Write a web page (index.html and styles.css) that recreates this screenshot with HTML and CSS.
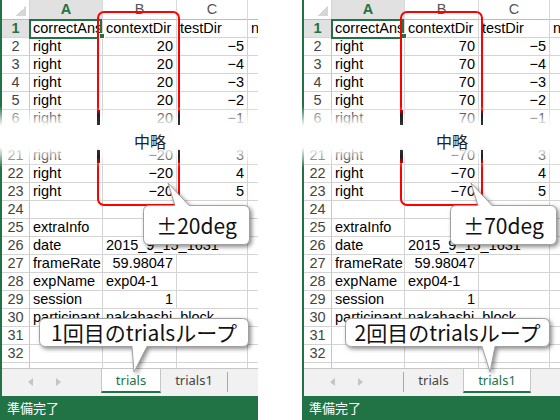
FILE: index.html
```html
<!DOCTYPE html>
<html lang="ja">
<head>
<meta charset="utf-8">
<link rel="stylesheet" href="styles.css">
</head>
<body>
<div class="page">

  <div class="panel">
    <div class="sheet">
      <div class="grid top">
        <div class="c corner"></div><div class="c ch sel">A</div><div class="c ch">B</div><div class="c ch">C</div><div class="c ch d"></div>
        <div class="c rh sel">1</div><div class="c">correctAns</div><div class="c">contextDir</div><div class="c">testDir</div><div class="c d">n</div>
        <div class="c rh">2</div><div class="c">right</div><div class="c n">20</div><div class="c n">−5</div><div class="c d"></div>
        <div class="c rh">3</div><div class="c">right</div><div class="c n">20</div><div class="c n">−4</div><div class="c d"></div>
        <div class="c rh">4</div><div class="c">right</div><div class="c n">20</div><div class="c n">−3</div><div class="c d"></div>
        <div class="c rh">5</div><div class="c">right</div><div class="c n">20</div><div class="c n">−2</div><div class="c d"></div>
        <div class="c rh">6</div><div class="c">right</div><div class="c n">20</div><div class="c n">−1</div><div class="c d"></div>
      </div>
      <div class="skip"></div>
      <div class="grid">
        <div class="c rh">21</div><div class="c">right</div><div class="c n">−20</div><div class="c n">3</div><div class="c d"></div>
        <div class="c rh">22</div><div class="c">right</div><div class="c n">−20</div><div class="c n">4</div><div class="c d"></div>
        <div class="c rh">23</div><div class="c">right</div><div class="c n">−20</div><div class="c n">5</div><div class="c d"></div>
        <div class="c rh">24</div><div class="c"></div><div class="c"></div><div class="c"></div><div class="c d"></div>
        <div class="c rh">25</div><div class="c">extraInfo</div><div class="c"></div><div class="c"></div><div class="c d"></div>
        <div class="c rh">26</div><div class="c">date</div><div class="c span2">2015_9_15_1631</div><div class="c d"></div>
        <div class="c rh">27</div><div class="c">frameRate</div><div class="c n">59.98047</div><div class="c"></div><div class="c d"></div>
        <div class="c rh">28</div><div class="c">expName</div><div class="c">exp04-1</div><div class="c"></div><div class="c d"></div>
        <div class="c rh">29</div><div class="c">session</div><div class="c n">1</div><div class="c"></div><div class="c d"></div>
        <div class="c rh">30</div><div class="c">participant</div><div class="c span2">nakahashi_block</div><div class="c d"></div>
        <div class="c rh">31</div><div class="c"></div><div class="c"></div><div class="c"></div><div class="c d"></div>
        <div class="c rh">32</div><div class="c"></div><div class="c"></div><div class="c"></div><div class="c d"></div>
        <div class="c rh"></div><div class="c"></div><div class="c"></div><div class="c"></div><div class="c d"></div>
      </div>
    </div>
    <div class="tabs">
      <div class="nav">
        <svg width="5" height="8" viewBox="0 0 5 8"><path d="M5 0V8L0 4Z" fill="#c4c4c4"/></svg>
        <svg width="5" height="8" viewBox="0 0 5 8"><path d="M0 0V8L5 4Z" fill="#c4c4c4"/></svg>
      </div>
      <div class="tab active w60">trials</div>
      <div class="tab w66">trials1</div>
      <div class="sep"></div>
    </div>
    <div class="status">準備完了</div>

    <div class="selbox"></div>
    <div class="handle"></div>
    <div class="redbox l"></div>
    <div class="tear"><span class="omit">中略</span></div>
    <div class="seg up" style="left:97px"></div>
    <div class="seg up" style="left:177.5px"></div>
    <div class="seg down" style="left:97px"></div>
    <div class="seg down" style="left:177.5px"></div>

    <div class="callout deg" style="left:143px">
      <svg width="107" height="40" viewBox="0 0 107 40"><path d="M6.5 .5H32L25 -22L46 .5H100.5Q106.5 .5 106.5 6.5V33.5Q106.5 39.5 100.5 39.5H6.5Q.5 39.5 .5 33.5V6.5Q.5 .5 6.5 .5Z"/></svg>
      <span>±20deg</span>
    </div>
    <div class="callout loop" style="left:39px;width:210px">
      <svg width="210" height="29" viewBox="0 0 210 29"><path d="M6.5 .5H203.5Q209.5 .5 209.5 6.5V22.5Q209.5 28.5 203.5 28.5H108L95 54L93 28.5H6.5Q.5 28.5 .5 22.5V6.5Q.5 .5 6.5 .5Z"/></svg>
      <span>1回目のtrialsループ</span>
    </div>
  </div>

  <div class="panel">
    <div class="sheet">
      <div class="grid top">
        <div class="c corner"></div><div class="c ch sel">A</div><div class="c ch">B</div><div class="c ch">C</div><div class="c ch d"></div>
        <div class="c rh sel">1</div><div class="c">correctAns</div><div class="c">contextDir</div><div class="c">testDir</div><div class="c d">n</div>
        <div class="c rh">2</div><div class="c">right</div><div class="c n">70</div><div class="c n">−5</div><div class="c d"></div>
        <div class="c rh">3</div><div class="c">right</div><div class="c n">70</div><div class="c n">−4</div><div class="c d"></div>
        <div class="c rh">4</div><div class="c">right</div><div class="c n">70</div><div class="c n">−3</div><div class="c d"></div>
        <div class="c rh">5</div><div class="c">right</div><div class="c n">70</div><div class="c n">−2</div><div class="c d"></div>
        <div class="c rh">6</div><div class="c">right</div><div class="c n">70</div><div class="c n">−1</div><div class="c d"></div>
      </div>
      <div class="skip"></div>
      <div class="grid">
        <div class="c rh">21</div><div class="c">right</div><div class="c n">−70</div><div class="c n">3</div><div class="c d"></div>
        <div class="c rh">22</div><div class="c">right</div><div class="c n">−70</div><div class="c n">4</div><div class="c d"></div>
        <div class="c rh">23</div><div class="c">right</div><div class="c n">−70</div><div class="c n">5</div><div class="c d"></div>
        <div class="c rh">24</div><div class="c"></div><div class="c"></div><div class="c"></div><div class="c d"></div>
        <div class="c rh">25</div><div class="c">extraInfo</div><div class="c"></div><div class="c"></div><div class="c d"></div>
        <div class="c rh">26</div><div class="c">date</div><div class="c span2">2015_9_15_1631</div><div class="c d"></div>
        <div class="c rh">27</div><div class="c">frameRate</div><div class="c n">59.98047</div><div class="c"></div><div class="c d"></div>
        <div class="c rh">28</div><div class="c">expName</div><div class="c">exp04-1</div><div class="c"></div><div class="c d"></div>
        <div class="c rh">29</div><div class="c">session</div><div class="c n">1</div><div class="c"></div><div class="c d"></div>
        <div class="c rh">30</div><div class="c">participant</div><div class="c span2">nakahashi_block</div><div class="c d"></div>
        <div class="c rh">31</div><div class="c"></div><div class="c"></div><div class="c"></div><div class="c d"></div>
        <div class="c rh">32</div><div class="c"></div><div class="c"></div><div class="c"></div><div class="c d"></div>
        <div class="c rh"></div><div class="c"></div><div class="c"></div><div class="c"></div><div class="c d"></div>
      </div>
    </div>
    <div class="tabs">
      <div class="nav">
        <svg width="5" height="8" viewBox="0 0 5 8"><path d="M5 0V8L0 4Z" fill="#c4c4c4"/></svg>
        <svg width="5" height="8" viewBox="0 0 5 8"><path d="M0 0V8L5 4Z" fill="#c4c4c4"/></svg>
      </div>
      <div class="sep"></div>
      <div class="tab w59">trials</div>
      <div class="tab active w68">trials1</div>
    </div>
    <div class="status">準備完了</div>

    <div class="selbox"></div>
    <div class="handle"></div>
    <div class="redbox r"></div>
    <div class="tear"><span class="omit">中略</span></div>
    <div class="seg up" style="left:98px"></div>
    <div class="seg up" style="left:178.5px"></div>
    <div class="seg down" style="left:98px"></div>
    <div class="seg down" style="left:178.5px"></div>

    <div class="callout deg" style="left:148px">
      <svg width="107" height="40" viewBox="0 0 107 40"><path d="M6.5 .5H28L21 -22L42 .5H100.5Q106.5 .5 106.5 6.5V33.5Q106.5 39.5 100.5 39.5H6.5Q.5 39.5 .5 33.5V6.5Q.5 .5 6.5 .5Z"/></svg>
      <span>±70deg</span>
    </div>
    <div class="callout loop" style="left:43px;width:205px">
      <svg width="205" height="29" viewBox="0 0 205 29"><path d="M6.5 .5H198.5Q204.5 .5 204.5 6.5V22.5Q204.5 28.5 198.5 28.5H150L145 54L137 28.5H6.5Q.5 28.5 .5 22.5V6.5Q.5 .5 6.5 .5Z"/></svg>
      <span>2回目のtrialsループ</span>
    </div>
  </div>

</div>
</body>
</html>
```

FILE: styles.css
```css
* { box-sizing: border-box; margin: 0; padding: 0; }

body {
  width: 560px;
  height: 420px;
  overflow: hidden;
  background: #fff;
  font-family: "Noto Sans", "Noto Sans CJK JP", sans-serif;
}

.page {
  display: flex;
  gap: 44px;
  width: 560px;
  height: 420px;
}

.panel {
  position: relative;
  flex: none;
  width: 258px;
  height: 420px;
  padding-left: 2px;
  display: flex;
  flex-direction: column;
  background: linear-gradient(#217346, #217346) left top / 2px 100% no-repeat;
}

.sheet {
  height: 368px;
  overflow: hidden;
  background: #fff;
  flex: none;
}

.grid {
  display: grid;
  grid-template-columns: 28px 73px 74px 71px 1fr;
  grid-auto-rows: 18px;
}
.grid.top { grid-template-rows: 20px; }

.skip { height: 19px; }

.c {
  border-right: 1px solid #d4d4d4;
  border-bottom: 1px solid #d4d4d4;
  font-family: "Liberation Sans", Arial, sans-serif;
  font-size: 14.5px;
  line-height: 17px;
  padding: 0 3px;
  white-space: nowrap;
  overflow: hidden;
  color: #000;
}
.c.n { text-align: right; }
.c.d { border-right: 0; }
.c.span2 { grid-column: span 2; overflow: visible; }

.rh {
  text-align: center;
  padding: 0;
  color: #444;
  border-right-color: #c6c6c6;
}
.ch {
  text-align: center;
  color: #555;
  line-height: 19px;
  border-bottom-color: #bdbdbd;
  border-right-color: #d9d9d9;
}
.sel {
  background: #e1e1e1;
  color: #217346;
  font-weight: bold;
}
.corner {
  padding: 0;
  background: #fff linear-gradient(135deg, transparent 50%, #d6d6d6 50%) no-repeat right 3px bottom 3px / 10px 10px;
  border-bottom-color: #bdbdbd;
}

.tabs {
  flex: none;
  height: 28px;
  background: #f1f1f1;
  border-top: 1px solid #c6c6c6;
  display: flex;
  align-items: flex-start;
}
.nav {
  width: 99px;
  flex: none;
  display: flex;
  gap: 23px;
  padding: 9px 0 0 26px;
}
.tab {
  flex: none;
  height: 24px;
  font-size: 13px;
  line-height: 23px;
  text-align: center;
  color: #444;
}
.tab.active {
  background: #fff;
  border-left: 1px solid #c6c6c6;
  border-right: 1px solid #c6c6c6;
  border-bottom: 2px solid #217346;
  color: #217346;
}
.w59 { width: 59px; }
.w60 { width: 60px; }
.w66 { width: 66px; }
.w68 { width: 68px; }
.sep {
  flex: none;
  width: 1px;
  height: 20px;
  margin-top: 3px;
  background: #a9a9a9;
}

.status {
  flex: 1;
  background: #217346;
  color: #fff;
  font-family: "Noto Sans CJK JP", sans-serif;
  font-size: 13px;
  line-height: 24px;
  padding-left: 5px;
}

.selbox {
  position: absolute;
  left: 29px;
  top: 19px;
  width: 73px;
  height: 20px;
  border: 2px solid #217346;
}
.handle {
  position: absolute;
  left: 99px;
  top: 33px;
  width: 6px;
  height: 6px;
  background: #217346;
  border: 1px solid #fff;
}

.redbox {
  position: absolute;
  top: 11px;
  width: 83px;
  height: 195px;
  border: 2.5px solid #ff0000;
  border-radius: 7px;
}
.redbox.l { left: 97px; }
.redbox.r { left: 98px; }

.tear {
  position: absolute;
  left: 0;
  top: 106px;
  width: 258px;
  height: 62px;
  background: linear-gradient(rgba(255,255,255,0), #fff 20px, #fff 41px, rgba(255,255,255,0));
}
.omit {
  display: block;
  margin: 26px 0 0 134px;
  font-family: "Noto Sans CJK JP", sans-serif;
  font-size: 16px;
  line-height: 18px;
  color: #222;
}

.seg {
  position: absolute;
  width: 2.5px;
}
.seg.up {
  top: 110px;
  height: 15px;
  background: linear-gradient(#e00000, #1e1e1e 5px, #333);
}
.seg.down {
  top: 150px;
  height: 13px;
  background: linear-gradient(#333, #1e1e1e 7px, #e00000);
}

.callout {
  position: absolute;
  display: flex;
  align-items: center;
  justify-content: center;
  font-family: "Noto Sans CJK JP", sans-serif;
  font-size: 21px;
  line-height: 1;
  color: #111;
}
.callout svg {
  position: absolute;
  left: 0;
  top: 0;
  overflow: visible;
  filter: drop-shadow(2px 2px 2px rgba(0,0,0,.45));
}
.callout svg path {
  fill: #fff;
  stroke: #a0a0a0;
  stroke-width: 1;
}
.callout span { position: relative; }
.callout.deg { top: 205px; width: 107px; height: 40px; }
.callout.loop { top: 318px; height: 29px; }
```
